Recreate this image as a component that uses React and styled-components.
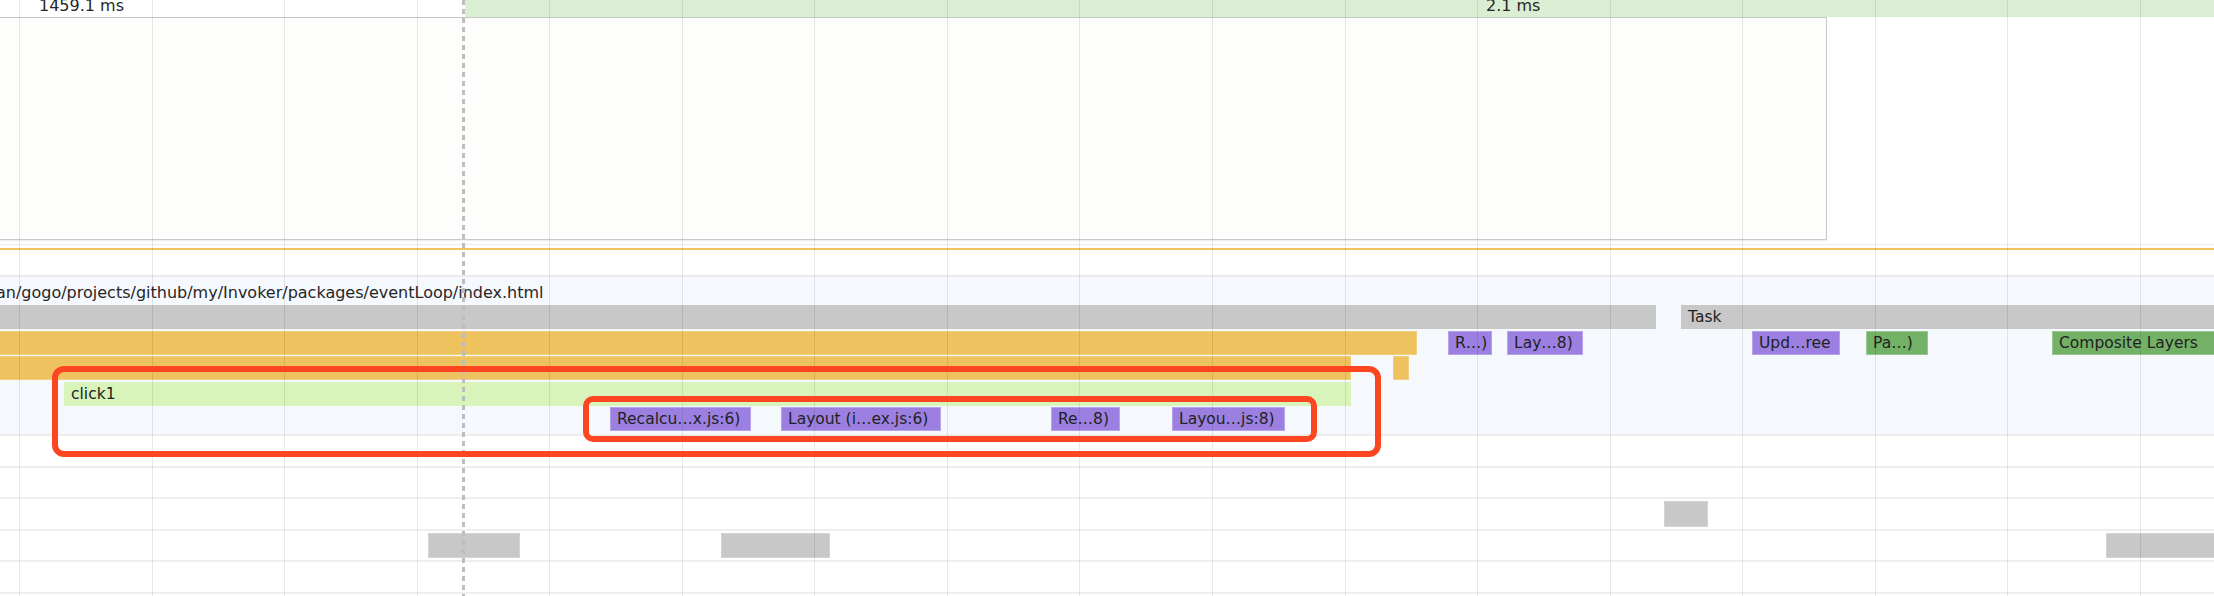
import React from 'react';
import styled, { createGlobalStyle } from 'styled-components';

const GlobalStyle = createGlobalStyle`
  html, body { margin: 0; padding: 0; background: #ffffff; }
  body { font-family: "DejaVu Sans", "Liberation Sans", sans-serif; }
`;

const Screen = styled.div`
  position: relative;
  width: 2214px;
  height: 596px;
  overflow: hidden;
  background: #ffffff;
  font-family: "DejaVu Sans", "Liberation Sans", sans-serif;
  font-size: 15.5px;
  color: #262626;
`;

/* ---------- timing header ---------- */
const TimingRow = styled.div`
  display: flex;
  height: 17px;
  font-size: 16px;
`;

const TimingSegment = styled.div`
  flex: ${(p) => (p.$grow ? '1 1 auto' : `0 0 ${p.$width}px`)};
  box-sizing: border-box;
  padding-left: ${(p) => p.$indent}px;
  background: ${(p) => (p.$green ? '#d9eed3' : 'transparent')};
  line-height: 12px;
  white-space: nowrap;
  overflow: hidden;
`;

/* ---------- filmstrip ---------- */
const Filmstrip = styled.div`
  display: flex;
  height: 223px;
`;

const FrameBox = styled.div`
  flex: 0 0 1827px;
  box-sizing: border-box;
  border: 1px solid #c8c8c8;
  border-left: none;
  background: #fdfdfb;
  box-shadow: 0 1px 1px rgba(0, 0, 0, 0.06);
`;

/* ---------- overview strip ---------- */
const OverviewStrip = styled.div`
  display: flex;
  flex-direction: column;
  height: 37px;
  box-sizing: border-box;
  padding-top: 4px;
`;

const HairLine = styled.div`
  height: 1px;
  background: #ececec;
`;

const CpuLine = styled.div`
  height: 2px;
  margin-top: 3px;
  background: #efc35e;
`;

const StripEdge = styled.div`
  margin-top: auto;
  height: 2px;
  background: #eaeaea;
`;

/* ---------- flame chart ---------- */
const FlameBand = styled.div`
  height: 157px;
  box-sizing: border-box;
  background: #f5f8fd;
  padding-bottom: 3px;
`;

const UrlRow = styled.div`
  height: 28px;
  box-sizing: border-box;
  padding-top: 4px;
  font-size: 16px;
  line-height: 24px;
  text-indent: -4px;
  white-space: nowrap;
  overflow: hidden;
`;

const Lanes = styled.div`
  display: flex;
  flex-direction: column;
  gap: 1.5px;
`;

const Lane = styled.div`
  position: relative;
  height: 24px;
`;

const barColors = {
  task: '#c8c8c8',
  script: '#edc25f',
  event: '#d9f4bb',
  layout: '#9b80e2',
  paint: '#73b166',
};

const Bar = styled.div`
  position: absolute;
  top: 0;
  height: 24px;
  box-sizing: border-box;
  padding-left: 7px;
  line-height: 24px;
  white-space: nowrap;
  overflow: hidden;
  color: #222222;
  background: ${(p) => barColors[p.$kind]};
  box-shadow: ${(p) =>
    p.$kind === 'layout' || p.$kind === 'paint'
      ? 'inset 0 0 0 1px rgba(255,255,255,0.28)'
      : p.$kind === 'script'
      ? 'inset 0 0 0 1px rgba(255,255,255,0.2)'
      : 'none'};
`;

/* ---------- lower tracks ---------- */
const Tracks = styled.div`
  display: flex;
  flex-direction: column;
`;

const Track = styled.div`
  position: relative;
  height: 31.6px;
  box-sizing: border-box;
  border-top: 2px solid #eeeeee;
`;

const Block = styled.div`
  position: absolute;
  top: 2px;
  height: 25px;
  background: #c8c8c8;
  box-shadow: inset 0 0 0 1px rgba(255, 255, 255, 0.2);
`;

/* ---------- overlays ---------- */
const GridOverlay = styled.div`
  position: absolute;
  inset: 0;
  pointer-events: none;
`;

const GridLine = styled.div`
  position: absolute;
  top: 0;
  bottom: 0;
  width: 1px;
  background: rgba(0, 0, 0, 0.09);
`;

const CursorMarker = styled.div`
  position: absolute;
  top: 0;
  bottom: 0;
  left: 462px;
  width: 3px;
  background: repeating-linear-gradient(
    to bottom,
    #bdbdbd 0px,
    #bdbdbd 5px,
    transparent 5px,
    transparent 9px
  );
  pointer-events: none;
`;

const Annotation = styled.div`
  position: absolute;
  left: ${(p) => p.$x}px;
  top: ${(p) => p.$y}px;
  width: ${(p) => p.$w}px;
  height: ${(p) => p.$h}px;
  box-sizing: border-box;
  border: 6px solid #fc4521;
  border-radius: ${(p) => p.$r}px;
  pointer-events: none;
`;

/* ---------- data ---------- */
const lanes = [
  [
    { kind: 'task', x: -2, w: 1658, label: '' },
    { kind: 'task', x: 1681, w: 540, label: 'Task' },
  ],
  [
    { kind: 'script', x: -2, w: 1419, label: '' },
    { kind: 'layout', x: 1448, w: 44, label: 'R…)' },
    { kind: 'layout', x: 1507, w: 76, label: 'Lay…8)' },
    { kind: 'layout', x: 1752, w: 88, label: 'Upd…ree' },
    { kind: 'paint', x: 1866, w: 62, label: 'Pa…)' },
    { kind: 'paint', x: 2052, w: 170, label: 'Composite Layers' },
  ],
  [
    { kind: 'script', x: -2, w: 1353, label: '' },
    { kind: 'script', x: 1393, w: 16, label: '' },
  ],
  [{ kind: 'event', x: 64, w: 1287, label: 'click1' }],
  [
    { kind: 'layout', x: 610, w: 141, label: 'Recalcu…x.js:6)' },
    { kind: 'layout', x: 781, w: 160, label: 'Layout (i…ex.js:6)' },
    { kind: 'layout', x: 1051, w: 69, label: 'Re…8)' },
    { kind: 'layout', x: 1172, w: 113, label: 'Layou…js:8)' },
  ],
];

const tracks = [
  [],
  [],
  [{ x: 1664, w: 44, h: 26 }],
  [
    { x: 428, w: 92 },
    { x: 721, w: 109 },
    { x: 2106, w: 120 },
  ],
  [],
  [],
];

const gridLines = Array.from({ length: 17 }, (_, k) => 19 + k * 132.56);

export default function App() {
  return (
    <>
      <GlobalStyle />
      <Screen>
        <TimingRow>
          <TimingSegment $width={465} $indent={39}>
            1459.1 ms
          </TimingSegment>
          <TimingSegment $grow $green $indent={1021}>
            2.1 ms
          </TimingSegment>
        </TimingRow>

        <Filmstrip>
          <FrameBox />
        </Filmstrip>

        <OverviewStrip>
          <HairLine />
          <CpuLine />
          <StripEdge />
        </OverviewStrip>

        <FlameBand>
          <UrlRow>an/gogo/projects/github/my/Invoker/packages/eventLoop/index.html</UrlRow>
          <Lanes>
            {lanes.map((lane, i) => (
              <Lane key={i}>
                {lane.map((b, j) => (
                  <Bar key={j} $kind={b.kind} style={{ left: b.x, width: b.w }}>
                    {b.label}
                  </Bar>
                ))}
              </Lane>
            ))}
          </Lanes>
        </FlameBand>

        <Tracks>
          {tracks.map((blocks, i) => (
            <Track key={i}>
              {blocks.map((b, j) => (
                <Block
                  key={j}
                  style={{ left: b.x, width: b.w, ...(b.h ? { height: b.h } : {}) }}
                />
              ))}
            </Track>
          ))}
        </Tracks>

        <GridOverlay>
          {gridLines.map((x) => (
            <GridLine key={x} style={{ left: Math.round(x) }} />
          ))}
        </GridOverlay>
        <CursorMarker />

        <Annotation $x={52} $y={366} $w={1329} $h={91} $r={12} />
        <Annotation $x={583} $y={396} $w={734} $h={46} $r={10} />
      </Screen>
    </>
  );
}
